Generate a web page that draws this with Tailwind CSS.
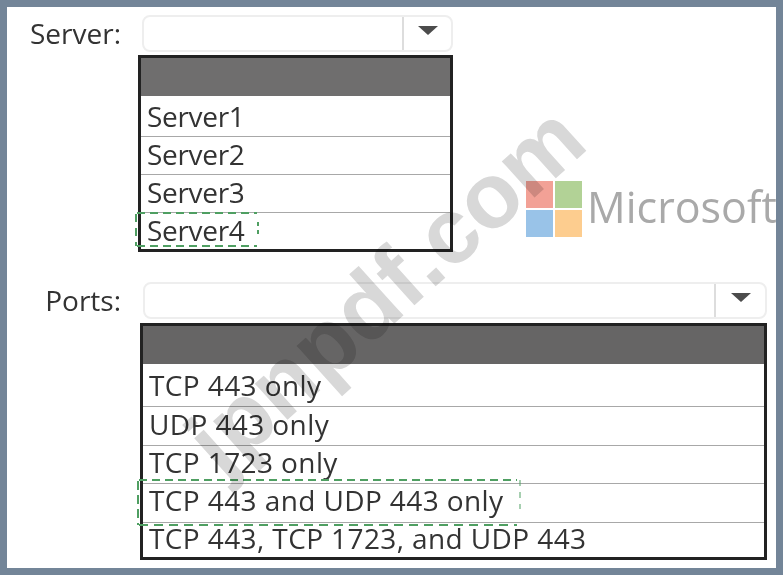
<!doctype html>
<html><head><meta charset="utf-8"><script src="https://cdn.jsdelivr.net/npm/@tailwindcss/browser@4"></script></head>
<body class="m-0">
<div class="relative w-[783px] h-[575px] overflow-hidden bg-[#738598] p-[7px] font-['Open_Sans','Noto_Sans',sans-serif] text-[#333333]">
  <div class="relative w-[769px] h-[561px] overflow-hidden bg-white blur-[0.6px]">
    <div class="flex flex-col">
      <section class="flex pt-[8px]">
        <div class="w-[114px] h-[37px] text-right text-[28px] leading-[37px]">Server:</div>
        <div class="ml-[21px] w-[311px]">
          <div class="w-[311px] h-[37px] flex justify-end border-2 border-[#eeeeee] rounded-lg">
            <div class="w-[49px] border-l-2 border-[#dddddd] flex items-center justify-center pb-[6px]">
              <svg width="24" height="12" viewBox="0 0 24 12"><path d="M2 1H22L12 10Z" fill="#4c4c4c"/></svg>
            </div>
          </div>
          <div class="relative -ml-[4px] mt-[3px] w-[315px] h-[197px] border-[3px] border-[#222222] flex flex-col">
            <div class="h-[38px] bg-[#6f6e6e]"></div>
            <div class="h-[41px] border-b border-[#a8a8a8] pl-[6px] text-[28px] leading-[41px] tracking-[-0.3px]">Server1</div>
            <div class="h-[38px] border-b border-[#a8a8a8] pl-[6px] text-[28px] leading-[34px] tracking-[-0.3px]">Server2</div>
            <div class="h-[38px] border-b border-[#a8a8a8] pl-[6px] text-[28px] leading-[35px] tracking-[-0.3px]">Server3</div>
            <div class="h-[36px] pl-[6px] text-[28px] leading-[35px] tracking-[-0.3px]">Server4</div>
            <svg class="absolute left-[-6px] top-[154px]" width="126" height="36" viewBox="0 0 126 36" fill="none" stroke="#4f9f62" stroke-width="2">
              <path d="M2 1H122" stroke-dasharray="8 5"/>
              <path d="M2 34H122" stroke-dasharray="8 5"/>
              <path d="M1 2V34" stroke-dasharray="8 6"/>
              <path d="M123 10V24" stroke-dasharray="4 4" />
            </svg>
          </div>
        </div>
      </section>
      <section class="flex mt-[30px]">
        <div class="w-[114px] h-[37px] text-right text-[28px] leading-[37px]">Ports:</div>
        <div class="ml-[22px] w-[624px]">
          <div class="w-[624px] h-[37px] flex justify-end border-2 border-[#eeeeee] rounded-lg">
            <div class="w-[51px] border-l-2 border-[#dddddd] flex items-center justify-center pb-[6px]">
              <svg width="24" height="12" viewBox="0 0 24 12"><path d="M2 1H22L12 10Z" fill="#4c4c4c"/></svg>
            </div>
          </div>
          <div class="relative -ml-[3px] mt-[4px] w-[627px] h-[237px] border-[3px] border-[#222222] flex flex-col">
            <div class="h-[38px] bg-[#666565]"></div>
            <div class="h-[43px] border-b border-[#a8a8a8] pl-[6px] text-[28px] leading-[43px] tracking-[0.4px]">TCP 443 only</div>
            <div class="h-[39px] border-b border-[#a8a8a8] pl-[6px] text-[28px] leading-[34px] tracking-[0.4px]">UDP 443 only</div>
            <div class="h-[38px] border-b border-[#a8a8a8] pl-[6px] text-[28px] leading-[33px] tracking-[0.4px]">TCP 1723 only</div>
            <div class="h-[39px] border-b border-[#a8a8a8] pl-[6px] text-[28px] leading-[33px] tracking-[0.4px]">TCP 443 and UDP 443 only</div>
            <div class="h-[34px] pl-[6px] text-[28px] leading-[30px] tracking-[0.4px]">TCP 443, TCP 1723, and UDP 443</div>
            <svg class="absolute left-[-6px] top-[153px]" width="386" height="48" viewBox="0 0 386 48" fill="none" stroke="#4f9f62" stroke-width="2">
              <path d="M2 1H380" stroke-dasharray="8 5"/>
              <path d="M2 46H380" stroke-dasharray="9 6"/>
              <path d="M1 2V46" stroke-dasharray="9 5"/>
              <path d="M383 1V30" stroke-dasharray="6 6" stroke-width="1"/>
            </svg>
          </div>
        </div>
      </section>
    </div>
    <div class="absolute left-[519px] top-[174px] w-[56px] h-[56px] grid grid-cols-2 gap-[2px]">
      <div class="bg-[#f2a196]"></div><div class="bg-[#b2d296]"></div>
      <div class="bg-[#99c3e8]"></div><div class="bg-[#fdcd8f]"></div>
    </div>
    <div class="absolute left-[580px] top-[170px] text-[43px] leading-[60px] font-medium text-[#a9a9a9] whitespace-nowrap">Microsoft</div>
    <div class="absolute left-[130px] top-[232px] text-[92px] leading-[100px] font-bold text-[#d8d8d8] font-['Liberation_Sans',sans-serif] whitespace-nowrap -rotate-[42deg] mix-blend-multiply">jpnpdf.com</div>
  </div>
</div>
</body></html>
